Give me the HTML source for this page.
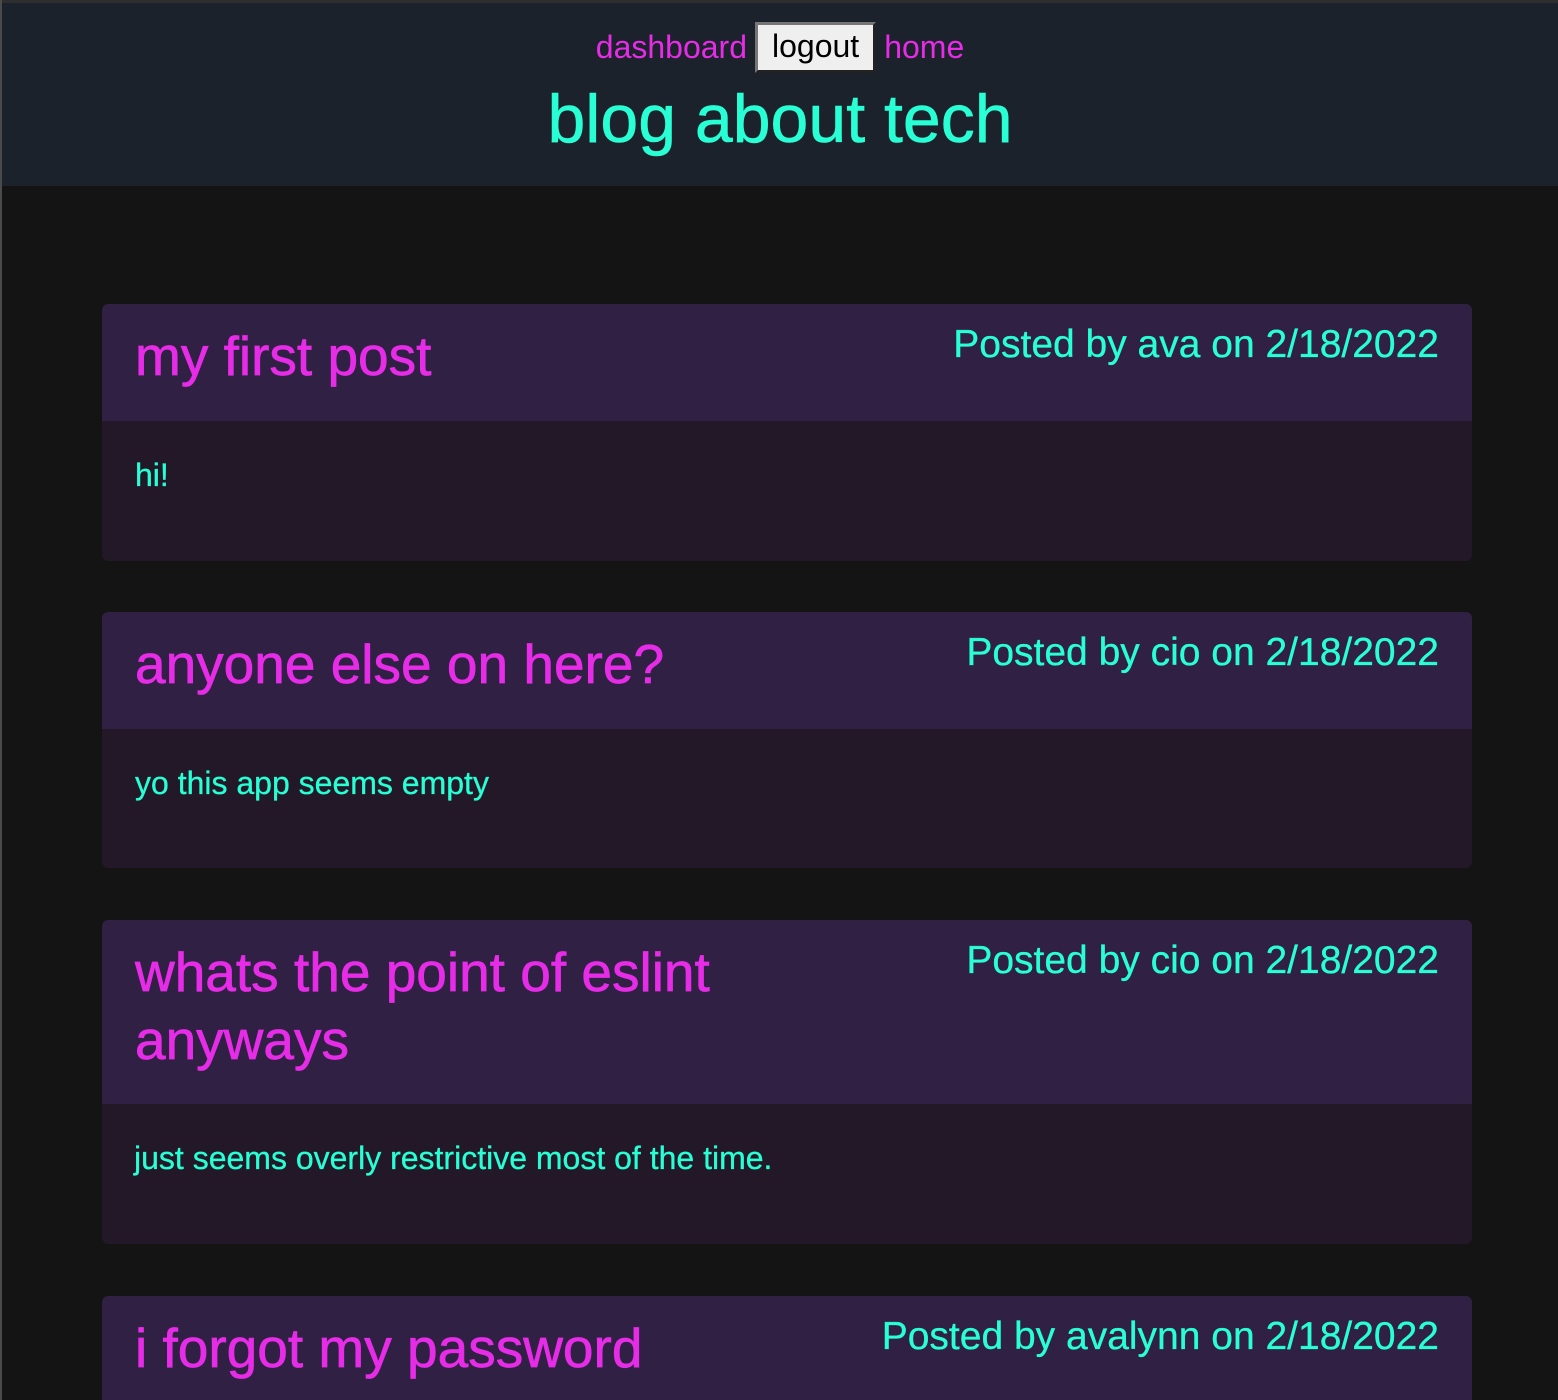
<!DOCTYPE html>
<html><head><meta charset="utf-8"><style>
*{margin:0;padding:0;box-sizing:border-box}
html,body{width:1558px;height:1400px;overflow:hidden;background:#141414;font-family:"Liberation Sans",Arial,sans-serif}
.top{position:absolute;left:0;top:0;width:1558px;height:3px;background:#2e2e2e}
.left{position:absolute;left:0;top:0;width:2px;height:1400px;background:#4a4a4a}
header{position:absolute;left:2px;top:3px;width:1556px;height:183px;background:#1c222b}
nav{position:absolute;top:19px;left:0;width:100%;text-align:center;font-size:32px;color:#e62ce6}
nav span{vertical-align:middle}
.btn{display:inline-block;vertical-align:middle;background:#efefef;color:#000;border:3px solid;border-color:#767676 #222 #222 #767676;padding:2px 14px 5px;margin:0 8px;font-size:32px;line-height:38px}
h1{position:absolute;top:76px;width:100%;text-align:center;font-size:68px;font-weight:normal;color:#28ffd4;line-height:80px;-webkit-text-stroke:0.6px #28ffd4}
.card{position:absolute;left:102px;width:1370px;border-radius:6px;overflow:hidden}
.ch{background:#2f2044;position:relative}
.cb{background:#221827;color:#28ffd4;font-size:32px;padding-left:33px;-webkit-text-stroke:0.3px #28ffd4}
.t{color:#e62ce6;font-size:55px;padding-left:33px;line-height:68px;width:720px;-webkit-text-stroke:0.7px #e62ce6}
.m{position:absolute;right:33px;top:18px;color:#28ffd4;font-size:39px;line-height:46px;-webkit-text-stroke:0.3px #28ffd4}
</style></head><body>
<div class="top"></div><div class="left"></div>
<header>
<nav><span>dashboard</span><span class="btn">logout</span><span>home</span></nav>
<h1>blog about tech</h1>
</header>

<div class="card" style="top:304px">
<div class="ch" style="height:117px"><div class="t" style="padding-top:18px">my first post</div><div class="m">Posted by ava on 2/18/2022</div></div>
<div class="cb" style="height:140px;padding-top:36px">hi!</div>
</div>

<div class="card" style="top:612px">
<div class="ch" style="height:117px"><div class="t" style="padding-top:18px">anyone else on here?</div><div class="m">Posted by cio on 2/18/2022</div></div>
<div class="cb" style="height:139px;padding-top:36px">yo this app seems empty</div>
</div>

<div class="card" style="top:920px">
<div class="ch" style="height:184px"><div class="t" style="padding-top:18px">whats the point of eslint anyways</div><div class="m">Posted by cio on 2/18/2022</div></div>
<div class="cb" style="height:140px;padding-top:36px;padding-left:32px">just seems overly restrictive most of the time.</div>
</div>

<div class="card" style="top:1296px;border-radius:6px 6px 0 0">
<div class="ch" style="height:104px"><div class="t" style="padding-top:18px">i forgot my password</div><div class="m">Posted by avalynn on 2/18/2022</div></div>
</div>
</body></html>
